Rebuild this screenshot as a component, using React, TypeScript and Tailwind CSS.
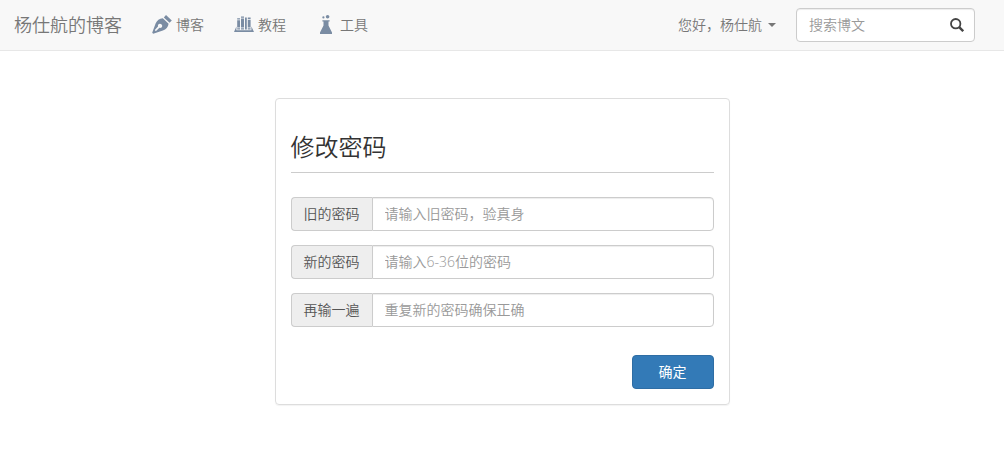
import React from 'react';

const PenIcon = () => (
  <svg className="w-5 h-5 fill-[#7a8ca3]" viewBox="0 0 20 20" aria-hidden="true">
    <path d="M14 0 19.8 5.4 17.6 7.8 11.8 2.4Z" />
    <path
      fillRule="evenodd"
      d="M10.8 3.2 16.6 8.7C16.2 12 14 14.4 10.9 15.6L1.2 18.8 0.2 17.8 3.6 8.4C5 5.4 7.4 3.4 10.8 3.2ZM2.8 14.9 6 11.6C5.6 10 6.6 8.8 7.9 8.8 9.3 8.8 10.2 9.8 10.2 11 10.2 12.4 8.8 13.2 7.4 12.8L3.8 16.2Z"
    />
  </svg>
);

const BooksIcon = () => (
  <svg className="w-5 h-5 fill-[#7a8ca3]" viewBox="0 0 20 20" aria-hidden="true">
    <path d="M3.2 3.2h2.8v1.2H3.2zM3.2 5.2h2.8v7.2H3.2zM3.2 13.2h2.8v1.3H3.2z" />
    <path d="M7 1.6h3v1.2H7zM7 3.6h3v8.8H7zM7 13.2h3v1.3H7z" />
    <path d="M11 2.4h1.8v12.1h-1.8zM13.8 2.6h2.8v1.6h-2.8zM13.8 5h2.8v7.4h-2.8zM13.8 13.2h2.8v1.3h-2.8z" />
    <path d="M2.4 11.5V15.2H17.4V11.5L20 17H0Z" />
  </svg>
);

const FlaskIcon = () => (
  <svg className="w-5 h-5 fill-[#7a8ca3]" viewBox="0 0 20 20" aria-hidden="true">
    <circle cx="7.4" cy="2.4" r="1.1" />
    <circle cx="11.6" cy="1.8" r="1.8" />
    <path d="M6.4 5.2h7.2v1.4H12.5V10.6L16 17.4V18.9H4V17.4L7.5 10.6V6.6H6.4Z" />
  </svg>
);

const SearchIcon = () => (
  <svg className="w-3.5 h-3.5" viewBox="0 0 14 14" fill="none" stroke="#444444" aria-hidden="true">
    <circle cx="5.7" cy="5.7" r="4.7" strokeWidth="1.8" />
    <path d="M9.2 9.2 13.2 13.2" strokeWidth="2.4" />
  </svg>
);

const links = [
  { icon: PenIcon, text: '博客' },
  { icon: BooksIcon, text: '教程' },
  { icon: FlaskIcon, text: '工具' }
];

const fields = [
  { id: 'old-password', label: '旧的密码', placeholder: '请输入旧密码，验真身' },
  { id: 'new-password', label: '新的密码', placeholder: '请输入6-36位的密码' },
  { id: 'repeat-password', label: '再输一遍', placeholder: '重复新的密码确保正确' }
];

const Navbar: React.FC = () => (
  <nav className="flex items-center min-h-[51px] pl-3.5 pr-[29px] bg-[#f8f8f8] border-b border-[#e7e7e7] text-[#777777]">
    <a href="#" className="mr-[30px] text-lg leading-5 whitespace-nowrap">杨仕航的博客</a>
    <div className="flex items-center gap-[30px]">
      {links.map(({ icon: Icon, text }) => (
        <a key={text} href="#" className="flex items-center gap-1 whitespace-nowrap">
          <Icon />
          {text}
        </a>
      ))}
    </div>

    <div className="flex items-center gap-5 ml-auto">
      <button type="button" className="flex items-center gap-1.5 whitespace-nowrap">
        您好，杨仕航
        <svg className="w-2 h-1 fill-[#777777]" viewBox="0 0 8 4" aria-hidden="true">
          <path d="M0 0h8L4 4z" />
        </svg>
      </button>
      <form className="flex items-center w-[179px] h-[34px] pl-3 pr-2.5 bg-white border border-[#cccccc] rounded shadow-[inset_0_1px_1px_rgba(0,0,0,0.075)]">
        <input
          type="text"
          aria-label="搜索博文"
          placeholder="搜索博文"
          className="flex-1 min-w-0 outline-none placeholder:text-[#999999]"
        />
        <button type="submit" aria-label="搜索">
          <SearchIcon />
        </button>
      </form>
    </div>
  </nav>
);

export default function App() {
  return (
    <div className="bg-white text-sm leading-5 font-[350] text-[#333333] font-['Open_Sans','Noto_Sans_CJK_SC',sans-serif]" lang="zh-CN">
      <Navbar />

      <main className="px-4 py-[47px]">
        <form className="max-w-[455px] mx-auto p-[15px] border border-[#dddddd] rounded shadow-[0_1px_1px_rgba(0,0,0,0.05)]">
          <h3 className="pt-5 pb-3 mb-6 text-2xl leading-[26px] font-[350] border-b border-[#cccccc]">修改密码</h3>

          <div className="flex flex-col gap-3.5">
            {fields.map(({ id, label, placeholder }) => (
              <div key={id} className="flex h-[34px]">
                <label
                  htmlFor={id}
                  className="flex items-center px-3 bg-[#eeeeee] border border-r-0 border-[#cccccc] rounded-l text-[#555555] whitespace-nowrap"
                >
                  {label}
                </label>
                <input
                  id={id}
                  type="password"
                  placeholder={placeholder}
                  className="flex-1 min-w-0 px-3 bg-white border border-[#cccccc] rounded-r shadow-[inset_0_1px_1px_rgba(0,0,0,0.075)] outline-none placeholder:text-[#999999]"
                />
              </div>
            ))}
          </div>

          <div className="flex justify-end mt-7">
            <button type="submit" className="w-[82px] h-[34px] bg-[#337ab7] border border-[#2e6da4] rounded font-normal text-white">
              确定
            </button>
          </div>
        </form>
      </main>
    </div>
  );
}
